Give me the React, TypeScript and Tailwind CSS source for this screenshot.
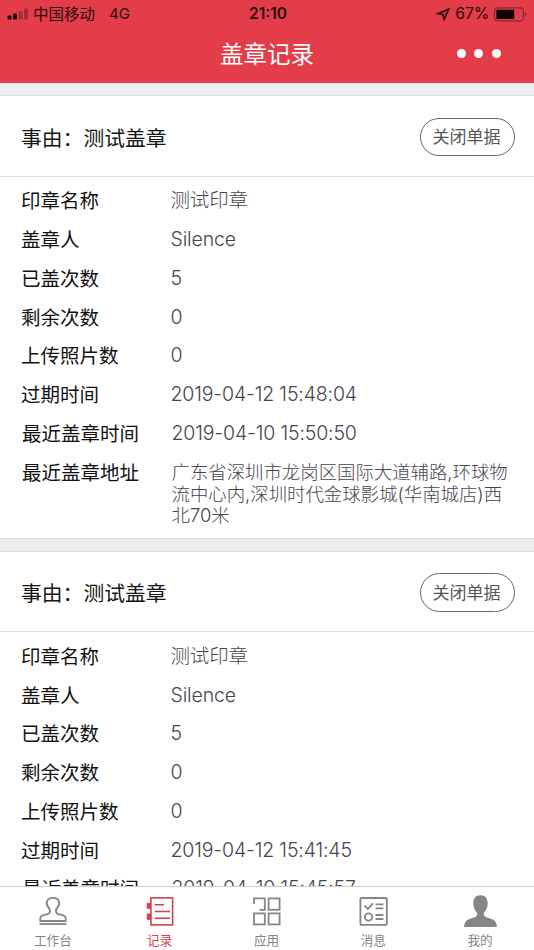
import type { ReactNode } from 'react'

interface SealRecord {
    reason: string
    rows: { label: string; value: string }[]
    address?: string[]
}

const records: SealRecord[] = [
    {
        reason: "测试盖章",
        rows: [
            { label: "印章名称", value: "测试印章" },
            { label: "盖章人", value: "Silence" },
            { label: "已盖次数", value: "5" },
            { label: "剩余次数", value: "0" },
            { label: "上传照片数", value: "0" },
            { label: "过期时间", value: "2019-04-12 15:48:04" },
            { label: "最近盖章时间", value: "2019-04-10 15:50:50" },
        ],
        address: ["广东省深圳市龙岗区国际大道辅路,环球物", "流中心内,深圳时代金球影城(华南城店)西", "北70米"]
    },
    {
        reason: "测试盖章",
        rows: [
            { label: "印章名称", value: "测试印章" },
            { label: "盖章人", value: "Silence" },
            { label: "已盖次数", value: "5" },
            { label: "剩余次数", value: "0" },
            { label: "上传照片数", value: "0" },
            { label: "过期时间", value: "2019-04-12 15:41:45" },
            { label: "最近盖章时间", value: "2019-04-10 15:45:57" },
        ]
    }
]

function StatusBar() {
    return (
        <div className="grid h-7 grid-cols-3 items-center pl-[7px] pr-[7px] text-[#2b0a0d]">
            <div className="flex items-center">
                <svg width="22" height="12" viewBox="0 0 22 12" fill="#1d0507">
                    <rect x="0.5" y="7.5" width="4" height="4" rx="1" />
                    <rect x="6" y="5.5" width="4" height="6" rx="1" />
                    <rect x="11.5" y="3" width="4" height="8.5" rx="1" opacity="0.3" />
                    <rect x="17" y="0.5" width="4" height="11" rx="1" opacity="0.3" />
                </svg>
                <span className="ml-1 pt-px text-[15.5px]">中国移动</span>
                <span className="ml-3.5 text-[15px]">4G</span>
            </div>
            <span className="pl-0.5 text-center text-[15.5px] font-semibold">21:10</span>
            <div className="flex items-center justify-end">
                <svg className="mr-[5px]" width="14" height="13" viewBox="0 0 14 13" fill="none" stroke="#2b0a0d" strokeWidth="1.7">
                    <path d="M12.6 1.2L2 5.6L7 6.4L8.2 11.2Z" />
                </svg>
                <span className="text-[15.8px] tracking-[-0.2px]">67%</span>
                <svg className="ml-1" width="34" height="15" viewBox="0 0 34 15">
                    <rect x="1.5" y="0.9" width="28.8" height="13" rx="3.2" fill="none" stroke="#8b2630" strokeWidth="1.2" />
                    <rect x="3.4" y="2.8" width="17.8" height="9.2" rx="1" fill="#080203" />
                    <path d="M31.8 5.2Q33.4 6 33.4 7.5Q33.4 9 31.8 9.8Z" fill="#8b2630" />
                </svg>
            </div>
        </div>
    )
}

function Header() {
    return (
        <header className="h-[83px] shrink-0 bg-[#e43d4a]">
            <StatusBar />
            <div className="grid h-[52px] grid-cols-3 items-center">
                <h1 className="col-start-2 pt-0.5 text-center text-[23.5px] text-white">盖章记录</h1>
                <div className="flex justify-end gap-[8.5px] pr-[33.5px] pb-px">
                    <i className="size-[9px] rounded-full bg-white"></i>
                    <i className="size-[9px] rounded-full bg-white"></i>
                    <i className="size-[9px] rounded-full bg-white"></i>
                </div>
            </div>
        </header>
    )
}

function RecordCard({ record }: { record: SealRecord }) {
    return (
        <section className="shrink-0 bg-white">
            <div className="flex h-[80.5px] items-center justify-between border-b border-[#dedee0] pt-0.5 pl-[21px] pr-[19px]">
                <h2 className="pt-[3px] text-[20.8px] text-[#151515]">事由：{record.reason}</h2>
                <button className="h-[38.5px] w-[95px] rounded-full border-[1.5px] border-[#666] pt-0.5 pr-0.5 text-[17px] text-[#555]">关闭单据</button>
            </div>
            <div className="pt-[5px]">
                {record.rows.map((row, index) => {
                    return (
                        <div key={index} className="flex h-[38.75px] items-center pl-[21px] nth-7:pl-[22px]">
                            <span className="w-[149.5px] pt-0.5 text-[19.5px] text-[#111]">{row.label}</span>
                            <span className="text-[19.5px] font-light tracking-[-0.15px] text-[#45454f]">{row.value}</span>
                        </div>
                    )
                })}
                {record.address && <div className="flex h-[85.25px] items-start pl-[22px]">
                    <span className="w-[149.5px] text-[19.5px] leading-10 text-[#111]">最近盖章地址</span>
                    <div className="pt-[9.5px] text-[18.4px] font-light leading-[21.6px] whitespace-nowrap text-[#45454f]">
                        {record.address.map((line) => <p key={line}>{line}</p>)}
                    </div>
                </div>}
            </div>
        </section>
    )
}

function TabIcon({ children }: { children: ReactNode }) {
    return (
        <svg width="36" height="34" viewBox="0 0 36 34" fill="none" stroke="currentColor" strokeWidth="1.8">
            {children}
        </svg>
    )
}

const tabs = [
    {
        name: "工作台",
        icon: <>
            <path d="M14.4 19C15.6 17 15.3 15.4 13.8 13.8C9.9 9.6 11.6 3.9 18 3.9S26.1 9.6 22.2 13.8C20.7 15.4 20.4 17 21.6 19C23 21.2 30.7 20.4 30.7 24V27H5.3V24C5.3 20.4 13 21.2 14.4 19Z" />
            <path d="M4.6 30H31.4" />
        </>
    },
    {
        name: "记录",
        icon: <>
            <rect x="8.9" y="3.9" width="21.7" height="27" strokeWidth="1.6" />
            <path d="M12.7 10.7H22M12.7 17.5H28M12.7 24.3H28" strokeWidth="1.6" />
            <path d="M5.2 9.2H8.7V14.4H5.2ZM5.2 20H8.7V25.4H5.2Z" fill="currentColor" strokeWidth="0.8" />
        </>
    },
    {
        name: "应用",
        icon: <>
            <path d="M5 10V4.4H15.8V15.8H10.5" />
            <rect x="19.6" y="4.4" width="11" height="11.4" />
            <rect x="5" y="19.4" width="10.8" height="11" />
            <rect x="19.6" y="19.4" width="11" height="11" />
        </>
    },
    {
        name: "消息",
        icon: <>
            <rect x="4.4" y="4" width="26.4" height="26.8" rx="0.8" />
            <path d="M8.4 11.6L11.8 15L17 9.4M19.6 10.4H27.4M19.6 14.3H27.4M19.6 21H27.4M19.6 25H27.4" />
            <circle cx="12.5" cy="23" r="3.7" />
        </>
    },
    {
        name: "我的",
        icon: <path d="M17.5 1.2C12.5 1.2 10.3 4.7 10.3 9.2C10.3 13.4 11.9 16.6 14.1 18.8C14.5 21.2 14 22.5 11.7 23.2C6 25 1.2 25.8 1.1 33H33.9C33.8 25.8 29 25 23.3 23.2C21 22.5 20.5 21.2 20.9 18.8C23.1 16.6 24.7 13.4 24.7 9.2C24.7 4.7 22.5 1.2 17.5 1.2Z" fill="currentColor" stroke="none" />
    },
]

function TabBar({ active }: { active: string }) {
    return (
        <nav className="grid h-16 shrink-0 grid-cols-5 border-t border-[#cfcfd1] bg-white pt-[7px]">
            {tabs.map((tab) => {
                return (
                    <a key={tab.name} className={`flex flex-col items-center ${tab.name === active ? "text-[#d83c4e]" : "text-[#858585]"}`}>
                        <TabIcon>{tab.icon}</TabIcon>
                        <span className="mt-[3px] pr-px text-[12.6px] leading-5">{tab.name}</span>
                    </a>
                )
            })}
        </nav>
    )
}

export default function App() {
    return (
        <div className="flex h-[950px] w-[534px] flex-col overflow-hidden bg-white font-[Inter,'Noto_Sans_CJK_SC',sans-serif]">
            <Header />
            <main className="flex min-h-0 flex-1 flex-col overflow-hidden">
                <div className="h-[13px] shrink-0 border-b border-[#dddde3] bg-[#eeedef]"></div>
                <RecordCard record={records[0]} />
                <div className="h-[13.5px] shrink-0 border-y border-[#dcdcde] bg-[#ecebef]"></div>
                <RecordCard record={records[1]} />
            </main>
            <TabBar active="记录" />
        </div>
    )
}
